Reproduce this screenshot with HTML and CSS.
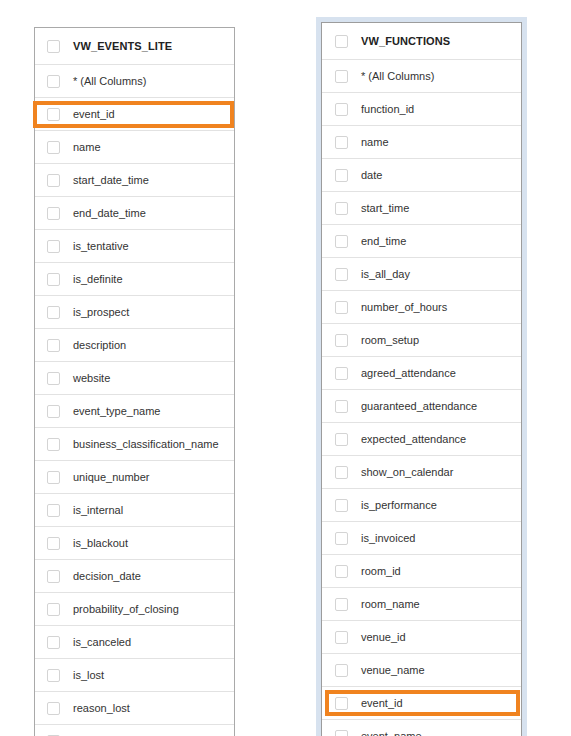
FILE: index.html
```html
<!DOCTYPE html>
<html>
<head>
<meta charset="utf-8">
<link rel="stylesheet" href="styles.css">
</head>
<body>
<div class="canvas">
  <div class="table table-left">
    <div class="row head"><span class="cb"></span><span class="label">VW_EVENTS_LITE</span></div>
    <div class="row"><span class="cb"></span><span class="label">* (All Columns)</span></div>
    <div class="row hl"><span class="cb"></span><span class="label">event_id</span><span class="mark"></span></div>
    <div class="row"><span class="cb"></span><span class="label">name</span></div>
    <div class="row"><span class="cb"></span><span class="label">start_date_time</span></div>
    <div class="row"><span class="cb"></span><span class="label">end_date_time</span></div>
    <div class="row"><span class="cb"></span><span class="label">is_tentative</span></div>
    <div class="row"><span class="cb"></span><span class="label">is_definite</span></div>
    <div class="row"><span class="cb"></span><span class="label">is_prospect</span></div>
    <div class="row"><span class="cb"></span><span class="label">description</span></div>
    <div class="row"><span class="cb"></span><span class="label">website</span></div>
    <div class="row"><span class="cb"></span><span class="label">event_type_name</span></div>
    <div class="row"><span class="cb"></span><span class="label">business_classification_name</span></div>
    <div class="row"><span class="cb"></span><span class="label">unique_number</span></div>
    <div class="row"><span class="cb"></span><span class="label">is_internal</span></div>
    <div class="row"><span class="cb"></span><span class="label">is_blackout</span></div>
    <div class="row"><span class="cb"></span><span class="label">decision_date</span></div>
    <div class="row"><span class="cb"></span><span class="label">probability_of_closing</span></div>
    <div class="row"><span class="cb"></span><span class="label">is_canceled</span></div>
    <div class="row"><span class="cb"></span><span class="label">is_lost</span></div>
    <div class="row"><span class="cb"></span><span class="label">reason_lost</span></div>
    <div class="row"><span class="cb"></span><span class="label">lost_to</span></div>
  </div>
  <div class="frame">
    <div class="table table-right">
      <div class="row head"><span class="cb"></span><span class="label">VW_FUNCTIONS</span></div>
      <div class="row"><span class="cb"></span><span class="label">* (All Columns)</span></div>
      <div class="row"><span class="cb"></span><span class="label">function_id</span></div>
      <div class="row"><span class="cb"></span><span class="label">name</span></div>
      <div class="row"><span class="cb"></span><span class="label">date</span></div>
      <div class="row"><span class="cb"></span><span class="label">start_time</span></div>
      <div class="row"><span class="cb"></span><span class="label">end_time</span></div>
      <div class="row"><span class="cb"></span><span class="label">is_all_day</span></div>
      <div class="row"><span class="cb"></span><span class="label">number_of_hours</span></div>
      <div class="row"><span class="cb"></span><span class="label">room_setup</span></div>
      <div class="row"><span class="cb"></span><span class="label">agreed_attendance</span></div>
      <div class="row"><span class="cb"></span><span class="label">guaranteed_attendance</span></div>
      <div class="row"><span class="cb"></span><span class="label">expected_attendance</span></div>
      <div class="row"><span class="cb"></span><span class="label">show_on_calendar</span></div>
      <div class="row"><span class="cb"></span><span class="label">is_performance</span></div>
      <div class="row"><span class="cb"></span><span class="label">is_invoiced</span></div>
      <div class="row"><span class="cb"></span><span class="label">room_id</span></div>
      <div class="row"><span class="cb"></span><span class="label">room_name</span></div>
      <div class="row"><span class="cb"></span><span class="label">venue_id</span></div>
      <div class="row"><span class="cb"></span><span class="label">venue_name</span></div>
      <div class="row hl"><span class="cb"></span><span class="label">event_id</span><span class="mark"></span></div>
      <div class="row"><span class="cb"></span><span class="label">event_name</span></div>
    </div>
  </div>
</div>
</body>
</html>
```

FILE: styles.css
```css
html, body {
  margin: 0;
  padding: 0;
  background: #ffffff;
  overflow: hidden;
}

.canvas {
  display: flex;
  align-items: flex-start;
  gap: 81px;
  padding-left: 34px;
  font-family: "Liberation Sans", Arial, sans-serif;
  font-size: 11px;
  color: #333333;
}

.table {
  width: 199px;
  border: 1px solid #a9a9a9;
  border-bottom: none;
  background: #ffffff;
}

.table-left {
  margin-top: 27px;
}

.frame {
  margin-top: 17px;
  padding: 5px 5px 0 5px;
  background: #d7e2ef;
}

.table-right {
  border-color: #9c9c9c;
}

.row {
  position: relative;
  display: flex;
  align-items: center;
  height: 32px;
  padding-left: 12px;
  border-bottom: 1px solid #e2e2e2;
  white-space: nowrap;
}

.table-right .row {
  padding-left: 13px;
}

.row.head {
  height: 36px;
  font-weight: bold;
  color: #222222;
  letter-spacing: 0.1px;
}

.cb {
  flex: none;
  width: 11px;
  height: 11px;
  border: 1px solid #d4d4d4;
  border-radius: 2px;
  background: #ffffff;
  margin-right: 13px;
}

.label {
  line-height: 1;
}

.mark {
  position: absolute;
  top: 3px;
  bottom: 2px;
  left: -2px;
  right: 0;
  border: 4px solid #f0831f;
}

.table-right .mark {
  top: 3px;
  bottom: 3px;
  left: 3px;
  right: 1px;
}
```
